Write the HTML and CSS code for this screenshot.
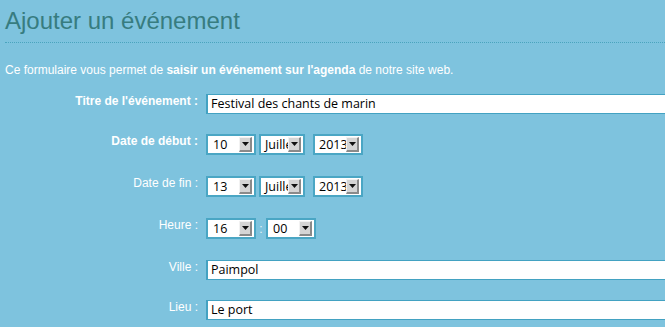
FILE: index.html
```html
<!DOCTYPE html>
<html lang="fr">
<head>
<meta charset="utf-8">
<title>Ajouter un événement</title>
<link rel="stylesheet" href="styles.css">
</head>
<body>
<div class="page">
  <h1 class="title">Ajouter un événement</h1>
  <p class="intro">Ce formulaire vous permet de <strong>saisir un événement sur l'agenda</strong> de notre site web.</p>
  <form class="form">
    <div class="row row-text">
      <label class="lbl lbl-strong">Titre de l'événement :</label>
      <div class="field"><div class="txt">Festival des chants de marin</div></div>
    </div>
    <div class="row row-sel">
      <label class="lbl lbl-strong">Date de début :</label>
      <div class="field">
        <div class="sel sel-day"><span class="sel-val">10</span><span class="sel-btn"><svg width="7" height="4" viewBox="0 0 7 4"><path d="M0 0h7L3.5 4z" fill="#111"/></svg></span></div>
        <div class="sel sel-month"><span class="sel-val">Juillet</span><span class="sel-btn"><svg width="7" height="4" viewBox="0 0 7 4"><path d="M0 0h7L3.5 4z" fill="#111"/></svg></span></div>
        <div class="sel sel-year"><span class="sel-val">2013</span><span class="sel-btn"><svg width="7" height="4" viewBox="0 0 7 4"><path d="M0 0h7L3.5 4z" fill="#111"/></svg></span></div>
      </div>
    </div>
    <div class="row row-sel">
      <label class="lbl">Date de fin :</label>
      <div class="field">
        <div class="sel sel-day"><span class="sel-val">13</span><span class="sel-btn"><svg width="7" height="4" viewBox="0 0 7 4"><path d="M0 0h7L3.5 4z" fill="#111"/></svg></span></div>
        <div class="sel sel-month"><span class="sel-val">Juillet</span><span class="sel-btn"><svg width="7" height="4" viewBox="0 0 7 4"><path d="M0 0h7L3.5 4z" fill="#111"/></svg></span></div>
        <div class="sel sel-year"><span class="sel-val">2013</span><span class="sel-btn"><svg width="7" height="4" viewBox="0 0 7 4"><path d="M0 0h7L3.5 4z" fill="#111"/></svg></span></div>
      </div>
    </div>
    <div class="row row-sel">
      <label class="lbl">Heure :</label>
      <div class="field">
        <div class="sel sel-day"><span class="sel-val">16</span><span class="sel-btn"><svg width="7" height="4" viewBox="0 0 7 4"><path d="M0 0h7L3.5 4z" fill="#111"/></svg></span></div>
        <span class="colon">:</span>
        <div class="sel sel-day"><span class="sel-val">00</span><span class="sel-btn"><svg width="7" height="4" viewBox="0 0 7 4"><path d="M0 0h7L3.5 4z" fill="#111"/></svg></span></div>
      </div>
    </div>
    <div class="row row-text">
      <label class="lbl">Ville :</label>
      <div class="field"><div class="txt">Paimpol</div></div>
    </div>
    <div class="row row-text">
      <label class="lbl">Lieu :</label>
      <div class="field"><div class="txt">Le port</div></div>
    </div>
  </form>
</div>
</body>
</html>
```

FILE: styles.css
```css
html, body {
  margin: 0;
  padding: 0;
  background: #7ec3de;
  overflow: hidden;
}

.page {
  padding: 0 0 0 5px;
  font-family: "Liberation Sans", Arial, sans-serif;
  font-size: 12px;
  color: #ffffff;
}

.title {
  margin: 0;
  padding: 7px 0 7px 0;
  font-size: 24px;
  line-height: 28px;
  font-weight: normal;
  color: #377c80;
  border-bottom: 1px dotted #4aa4be;
}

.intro {
  margin: 20px 0 17px 0;
  line-height: 14px;
}

.intro strong {
  font-weight: bold;
}

.form {
  margin: 0;
}

.row {
  display: flex;
  align-items: flex-start;
  margin-bottom: 20px;
}

.row-text {
  height: 20px;
}

.row-sel {
  height: 22px;
}

.lbl {
  width: 193px;
  text-align: right;
  line-height: 14px;
  flex: none;
}

.lbl-strong {
  font-weight: bold;
}

.field {
  margin-left: 8px;
  display: flex;
  align-items: center;
}

.txt {
  box-sizing: border-box;
  width: 520px;
  height: 20px;
  background: #ffffff;
  border: 2px solid #43a2c2;
  border-top-width: 1px;
  border-bottom-width: 1px;
  padding: 0 3px;
  font-family: "Open Sans", "DejaVu Sans", sans-serif;
  font-size: 12.5px;
  line-height: 18px;
  color: #000000;
  white-space: nowrap;
}

.sel {
  position: relative;
  box-sizing: border-box;
  display: flex;
  align-items: center;
  height: 21px;
  background: #ffffff;
  border: 2px solid #4aa6c4;
  padding: 0 2px 0 5px;
  font-family: "Open Sans", "DejaVu Sans", sans-serif;
  font-size: 12.5px;
  color: #000000;
}

.sel-day {
  width: 50px;
}

.sel-month {
  width: 46px;
  margin-left: 3px;
  padding-left: 4px;
}

.sel-year {
  width: 50px;
  margin-left: 8px;
  padding-left: 4px;
}

.sel-val {
  white-space: nowrap;
  line-height: 17px;
}

.sel-btn {
  position: absolute;
  right: 2px;
  top: 1px;
  box-sizing: border-box;
  width: 13px;
  height: 15px;
  display: flex;
  align-items: center;
  justify-content: center;
  background: #d5d5d5;
  border-top: 1px solid #f2f2f2;
  border-left: 1px solid #f2f2f2;
  border-right: 2px solid #8a8a8a;
  border-bottom: 2px solid #8a8a8a;
}

.colon {
  width: 10px;
  text-align: center;
  color: #e8f4f8;
  font-size: 12px;
}
```
